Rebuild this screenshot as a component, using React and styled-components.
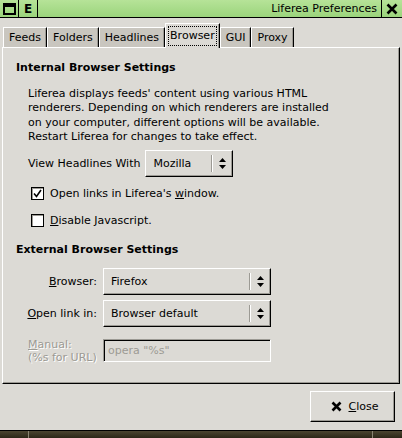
import React from 'react';
import styled, { createGlobalStyle } from 'styled-components';

const GlobalStyle = createGlobalStyle`
  html, body {
    margin: 0;
    padding: 0;
    background: #dcdad5;
  }
  body {
    font-family: 'DejaVu Sans', 'Noto Sans', sans-serif;
    font-size: 11px;
    color: #000;
  }
  * {
    box-sizing: border-box;
  }
`;

const Window = styled.div`
  width: 402px;
  height: 438px;
  display: flex;
  flex-direction: column;
  background: #dcdad5;
  overflow: hidden;
`;

const TitleBar = styled.div`
  height: 18px;
  display: flex;
  border-bottom: 1px solid #000;
  background: linear-gradient(#b6e398, #9bd47c);
`;

const TitleButton = styled.div`
  width: ${({ $w }) => $w || 19}px;
  display: flex;
  align-items: center;
  justify-content: center;
  border-right: ${({ $right }) => ($right ? 'none' : '1px solid #000')};
  border-left: ${({ $right }) => ($right ? '1px solid #000' : 'none')};
  font-weight: bold;
  font-size: 12px;
`;

const TitleText = styled.div`
  flex: 1;
  display: flex;
  align-items: center;
  justify-content: flex-end;
  padding-right: 4px;
  font-size: 11px;
`;

const Body = styled.div`
  flex: 1;
  display: flex;
  flex-direction: column;
  padding: 5px 2px 0;
`;

const TabRow = styled.div`
  display: flex;
  align-items: flex-end;
  padding-left: 1px;
  height: 24px;
  position: relative;
  z-index: 1;
`;

const Tab = styled.div`
  height: ${({ $active }) => ($active ? 25 : 20)}px;
  margin-bottom: ${({ $active }) => ($active ? -1 : 0)}px;
  padding: ${({ $active }) => ($active ? '2px 2px 3px 2px' : '0 5px')};
  display: flex;
  align-items: center;
  background: ${({ $active }) => ($active ? '#dcdad5' : '#c9c6bf')};
  border-top: 1px solid #fff;
  border-left: 1px solid #fff;
  border-right: 1px solid #000;
  box-shadow: inset -1px 0 #9c9a94;
`;

const Focus = styled.span`
  border: 1px dotted #000;
  padding: 2px 1px 3px;
`;

const Panel = styled.div`
  flex: 1;
  display: flex;
  flex-direction: column;
  border-top: 1px solid #fff;
  border-left: 1px solid #fff;
  border-right: 1px solid #000;
  border-bottom: 1px solid #000;
  box-shadow: inset -1px -1px #9c9a94;
  padding: 13px 12px 0 13px;
`;

const Heading = styled.div`
  font-weight: bold;
  line-height: 14px;
  margin-top: ${({ $mt }) => $mt || 0}px;
`;

const Section = styled.div`
  display: flex;
  flex-direction: column;
  padding-left: 12px;
`;

const Paragraph = styled.p`
  margin: 12px 0 0;
  line-height: 14.4px;
`;

const InlineRow = styled.div`
  display: flex;
  align-items: center;
  gap: 5px;
  margin-top: ${({ $mt }) => $mt || 0}px;
`;

const Combo = styled.div`
  width: ${({ $w }) => $w}px;
  height: ${({ $h }) => $h || 27}px;
  display: flex;
  align-items: center;
  background: #dcdad5;
  border-top: 1px solid #fff;
  border-left: 1px solid #fff;
  border-right: 1px solid #000;
  border-bottom: 1px solid #000;
  box-shadow: inset -1px -1px #9c9a94;
  padding-left: 7px;
`;

const ComboText = styled.span`
  flex: 1;
`;

const ComboSep = styled.span`
  width: 2px;
  height: 17px;
  border-left: 1px solid #9c9a94;
  border-right: 1px solid #fff;
`;

const ComboArrows = styled.span`
  width: 19px;
  display: flex;
  justify-content: center;
`;

const CheckRow = styled.label`
  display: flex;
  align-items: center;
  gap: 6px;
  margin-top: ${({ $mt }) => $mt}px;
  padding-left: 3px;
`;

const CheckBox = styled.span`
  width: 13px;
  height: 13px;
  background: #fff;
  border: 1px solid #000;
  box-shadow: inset 1px 1px #9c9a94;
  display: flex;
  align-items: center;
  justify-content: center;
`;

const Ul = styled.span`
  text-decoration: underline;
  text-underline-offset: 1px;
`;

const FormGrid = styled.div`
  display: grid;
  grid-template-columns: 70px 168px;
  column-gap: 6px;
  row-gap: 5px;
  margin-top: 11px;
  margin-left: -1px;
  align-items: center;
`;

const Label = styled.div`
  text-align: ${({ $align }) => $align || 'right'};
  white-space: nowrap;
  color: ${({ $dim }) => ($dim ? '#9c9a94' : '#000')};
  text-shadow: ${({ $dim }) => ($dim ? '1px 1px #fff' : 'none')};
  line-height: 13px;
`;

const Entry = styled.div`
  height: 23px;
  margin-top: 6px;
  display: flex;
  align-items: center;
  padding-left: 4px;
  border-top: 1px solid #9c9a94;
  border-left: 1px solid #9c9a94;
  border-right: 1px solid #fff;
  border-bottom: 1px solid #fff;
  box-shadow: inset 1px 1px #000;
  color: #9c9a94;
`;

const EntryLabel = styled(Label)`
  margin-top: 6px;
  padding-left: 1px;
`;

const ButtonRow = styled.div`
  display: flex;
  justify-content: flex-end;
  padding: 7px 5px 8px 0;
`;

const Button = styled.div`
  width: 85px;
  height: 31px;
  display: flex;
  align-items: center;
  justify-content: center;
  gap: 7px;
  border-top: 1px solid #fff;
  border-left: 1px solid #fff;
  border-right: 1px solid #000;
  border-bottom: 1px solid #000;
  box-shadow: inset -1px -1px #9c9a94;
  padding-left: 4px;
`;

const Taskbar = styled.div`
  height: 8px;
  display: flex;
  border-top: 1px solid #000;
  background: linear-gradient(#4b4430, #2c2717);
`;

const TaskCell = styled.div`
  width: ${({ $w }) => $w}px;
  flex: ${({ $grow }) => ($grow ? 1 : 'none')};
  border-right: ${({ $last }) => ($last ? 'none' : '1px solid #8a8472')};
`;

const Arrows = () => (
  <svg width="9" height="13" viewBox="0 0 9 13">
    <path d="M4.5 1 L8 5 L1 5 Z" fill="#000" />
    <path d="M4.5 12 L8 8 L1 8 Z" fill="#000" />
  </svg>
);

const Select = ({ w, children }) => (
  <Combo $w={w}>
    <ComboText>{children}</ComboText>
    <ComboSep />
    <ComboArrows>
      <Arrows />
    </ComboArrows>
  </Combo>
);

const App = () => (
  <Window>
    <GlobalStyle />
    <TitleBar>
      <TitleButton>
        <svg width="13" height="12" viewBox="0 0 13 12">
          <rect x="1" y="1" width="11" height="10" fill="none" stroke="#000" strokeWidth="2" />
          <rect x="1" y="1" width="11" height="3" fill="#000" />
        </svg>
      </TitleButton>
      <TitleButton>E</TitleButton>
      <TitleText>Liferea Preferences</TitleText>
      <TitleButton $right $w={21}>
        <svg width="12" height="12" viewBox="0 0 12 12">
          <path d="M1.5 1.5 L10.5 10.5 M10.5 1.5 L1.5 10.5" stroke="#000" strokeWidth="2.6" />
        </svg>
      </TitleButton>
    </TitleBar>

    <Body>
      <TabRow>
        <Tab>Feeds</Tab>
        <Tab>Folders</Tab>
        <Tab>Headlines</Tab>
        <Tab $active>
          <Focus>Browser</Focus>
        </Tab>
        <Tab>GUI</Tab>
        <Tab>Proxy</Tab>
      </TabRow>

      <Panel>
        <Heading>Internal Browser Settings</Heading>
        <Section>
          <Paragraph>
            Liferea displays feeds' content using various HTML
            <br />
            renderers. Depending on which renderers are installed
            <br />
            on your computer, different options will be available.
            <br />
            Restart Liferea for changes to take effect.
          </Paragraph>
          <InlineRow $mt={5}>
            <span>View Headlines With</span>
            <Select w={88}>Mozilla</Select>
          </InlineRow>
          <CheckRow $mt={10}>
            <CheckBox>
              <svg width="9" height="9" viewBox="0 0 9 9">
                <path d="M1 4.5 L3.5 7.5 L8 1" fill="none" stroke="#000" strokeWidth="1.6" />
              </svg>
            </CheckBox>
            <span>
              Open links in Liferea's <Ul>w</Ul>indow.
            </span>
          </CheckRow>
          <CheckRow $mt={14}>
            <CheckBox />
            <span>
              <Ul>D</Ul>isable Javascript.
            </span>
          </CheckRow>
        </Section>

        <Heading $mt={16}>External Browser Settings</Heading>
        <Section>
          <FormGrid>
            <Label>
              <Ul>B</Ul>rowser:
            </Label>
            <Select w={168}>Firefox</Select>
            <Label>
              <Ul>O</Ul>pen link in:
            </Label>
            <Select w={168}>Browser default</Select>
            <EntryLabel $align="left" $dim>
              <Ul>M</Ul>anual:
              <br />
              (%s for URL)
            </EntryLabel>
            <Entry>opera "%s"</Entry>
          </FormGrid>
        </Section>
      </Panel>

      <ButtonRow>
        <Button>
          <svg width="11" height="11" viewBox="0 0 11 11">
            <path d="M1.5 1.5 L9.5 9.5 M9.5 1.5 L1.5 9.5" stroke="#000" strokeWidth="2.6" />
          </svg>
          <span>
            <Ul>C</Ul>lose
          </span>
        </Button>
      </ButtonRow>
    </Body>

    <Taskbar>
      <TaskCell $w={29} />
      <TaskCell $grow />
      <TaskCell $w={29} $last />
    </Taskbar>
  </Window>
);

export default App;
